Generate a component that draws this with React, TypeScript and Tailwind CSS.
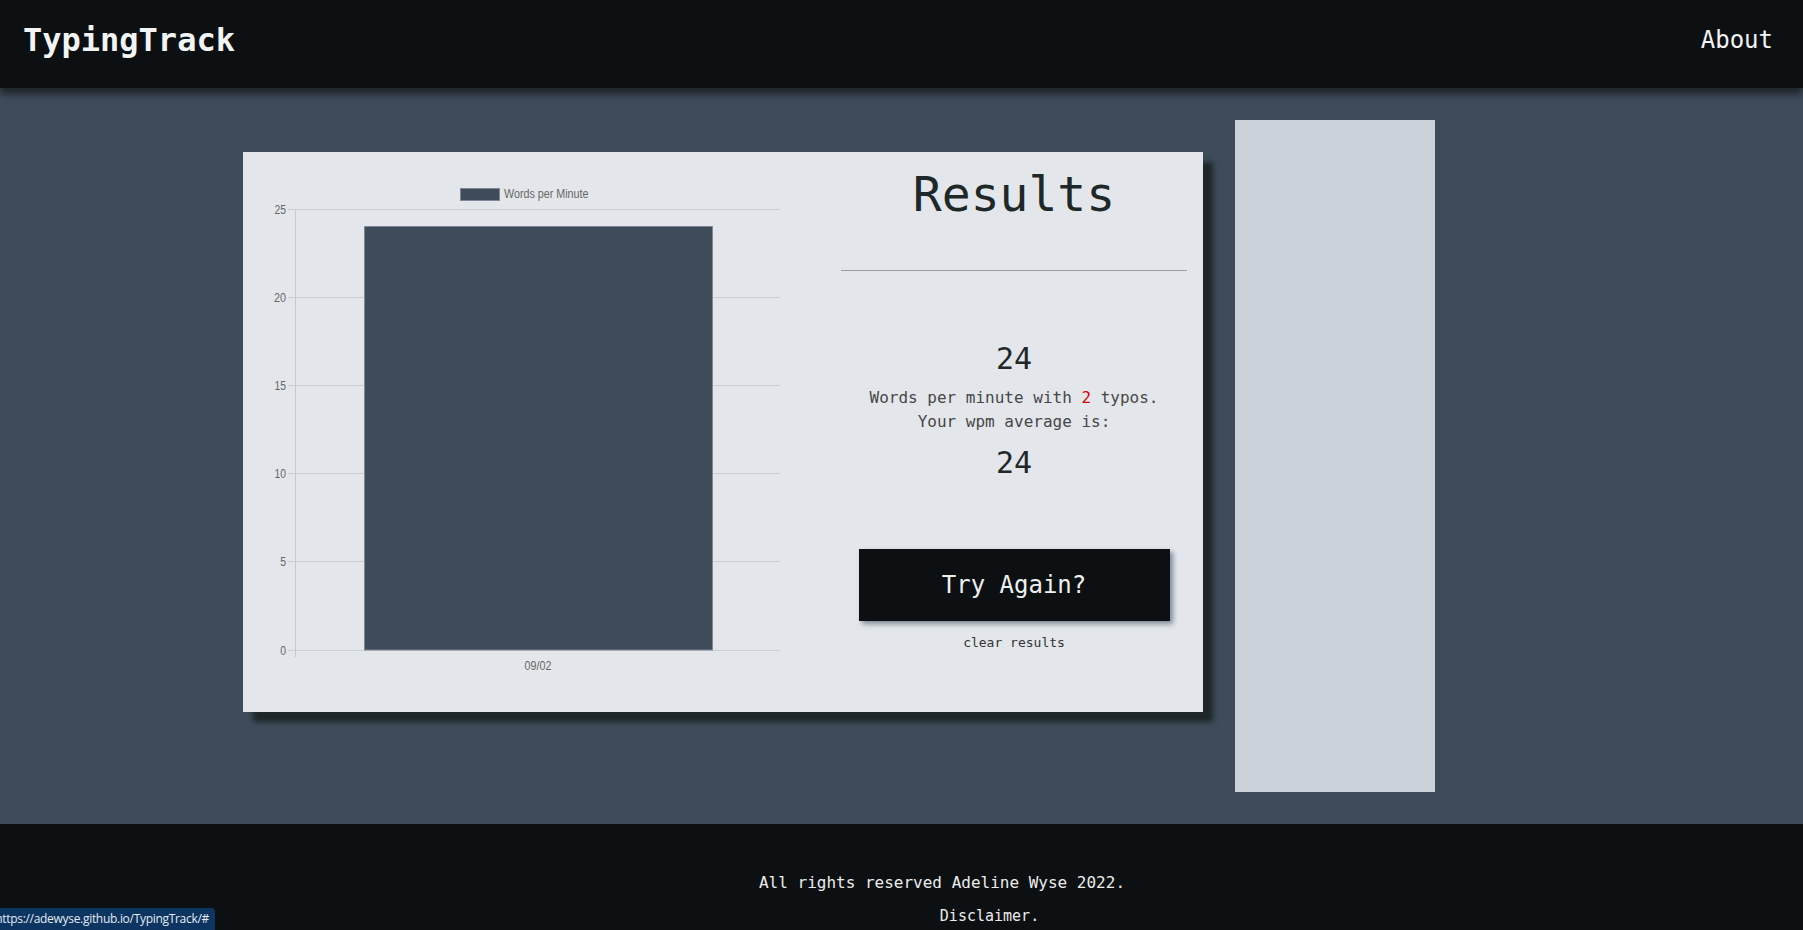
import React from "react";

function Chart() {
  const ticks = [
    { v: "25", y: 57, w: 11.5 },
    { v: "20", y: 145, w: 12 },
    { v: "15", y: 233, w: 11.5 },
    { v: "10", y: 321, w: 11.5 },
    { v: "5", y: 409, w: 5.8 },
    { v: "0", y: 498, w: 5.8 },
  ];
  return (
    <svg width={598} height={560} viewBox="0 0 598 560" className="block">
      {ticks.map((t) => (
        <g key={t.v}>
          <line x1={45} x2={537} y1={t.y + 0.5} y2={t.y + 0.5} stroke="#cacdd2" strokeWidth={1} />
          <text
            x={43}
            y={t.y + 4.5}
            textAnchor="end"
            fontFamily="'Liberation Sans', Arial, sans-serif"
            fontSize={12}
            fill="#666"
            textLength={t.w}
            lengthAdjust="spacingAndGlyphs"
          >
            {t.v}
          </text>
        </g>
      ))}
      <line x1={52.5} x2={52.5} y1={57} y2={505} stroke="#c6c9ce" strokeWidth={1} />
      <rect x={121.5} y={74.5} width={348} height={423.5} fill="#3e4c5a" stroke="#7f8799" strokeWidth={1} />
      <rect x={217.5} y={36.5} width={39} height={12} fill="#3e4c5a" stroke="#7f8799" strokeWidth={1} />
      <text
        x={261}
        y={45.5}
        fontFamily="'Liberation Sans', Arial, sans-serif"
        fontSize={12}
        fill="#666"
        textLength={84.5}
        lengthAdjust="spacingAndGlyphs"
      >
        Words per Minute
      </text>
      <text
        x={295}
        y={518}
        textAnchor="middle"
        fontFamily="'Liberation Sans', Arial, sans-serif"
        fontSize={12}
        fill="#666"
        textLength={26.8}
        lengthAdjust="spacingAndGlyphs"
      >
        09/02
      </text>
    </svg>
  );
}

export default function App() {
  return (
    <div className="relative w-full h-[930px] overflow-hidden flex flex-col bg-[#3e4c5a] font-['DejaVu_Sans_Mono','Liberation_Mono',monospace]">
      <header className="relative z-10 h-[88px] shrink-0 bg-[#0c1012] flex items-center justify-between pl-[23px] pr-[30px] pb-2 shadow-[0_6px_8px_rgba(0,0,0,0.55)]">
        <h1 className="text-[32px] font-bold leading-none text-[#f2f4f4]">TypingTrack</h1>
        <a href="#" className="text-[24px] leading-none text-[#f2f4f4]">
          About
        </a>
      </header>

      <main className="flex-1 flex items-start pl-[243px] pt-8">
        <section className="mt-8 w-[960px] h-[560px] shrink-0 bg-[#e3e6eb] shadow-[10px_10px_5px_#1e2729] flex">
          <div className="w-[598px] shrink-0">
            <Chart />
          </div>
          <div className="flex-1 pr-4 pt-[14px] flex flex-col items-center text-center">
            <h2 className="text-[48px] leading-[56px] font-normal text-[#1e2828]">Results</h2>
            <div className="mt-12 w-full h-px bg-[#9c9c9c]" />
            <div className="mt-[70px] text-[30px] leading-[36px] text-[#1e2828]">24</div>
            <p className="mt-[9px] text-[16px] leading-6 text-[#474747]">
              Words per minute with <span className="text-[#dd0000]">2</span> typos.
              <br />
              Your wpm average is:
            </p>
            <div className="mt-[11px] text-[30px] leading-[36px] text-[#1e2828]">24</div>
            <button className="mt-[68px] w-[311px] h-[72px] bg-[#0c1012] text-[24px] text-[#eef0f0] shadow-[3px_3px_5px_#7f8a97]">
              Try Again?
            </button>
            <a href="#" className="mt-3 text-[13px] leading-5 text-[#333]">
              clear results
            </a>
          </div>
        </section>
        <aside className="ml-8 w-[200px] h-[672px] shrink-0 bg-[#cbd2da]" />
      </main>

      <footer className="h-[106px] shrink-0 bg-[#0c1012] flex flex-col items-center pt-[47px] text-[16px] leading-6 text-[#ececec]">
        <div className="ml-[81px]">All rights reserved Adeline Wyse 2022.</div>
        <div className="mt-[9px] ml-[176px] text-[15px]">Disclaimer.</div>
      </footer>

      <div className="fixed bottom-0 left-0 w-[215px] h-[22px] bg-[#0c3562] rounded-tr-[4px] overflow-hidden flex items-center justify-end pr-[6px] whitespace-nowrap font-['Open_Sans','Noto_Sans',sans-serif] text-[12px] tracking-[-0.3px] text-[#e4eaf1]">
        https://adewyse.github.io/TypingTrack/#
      </div>
    </div>
  );
}
